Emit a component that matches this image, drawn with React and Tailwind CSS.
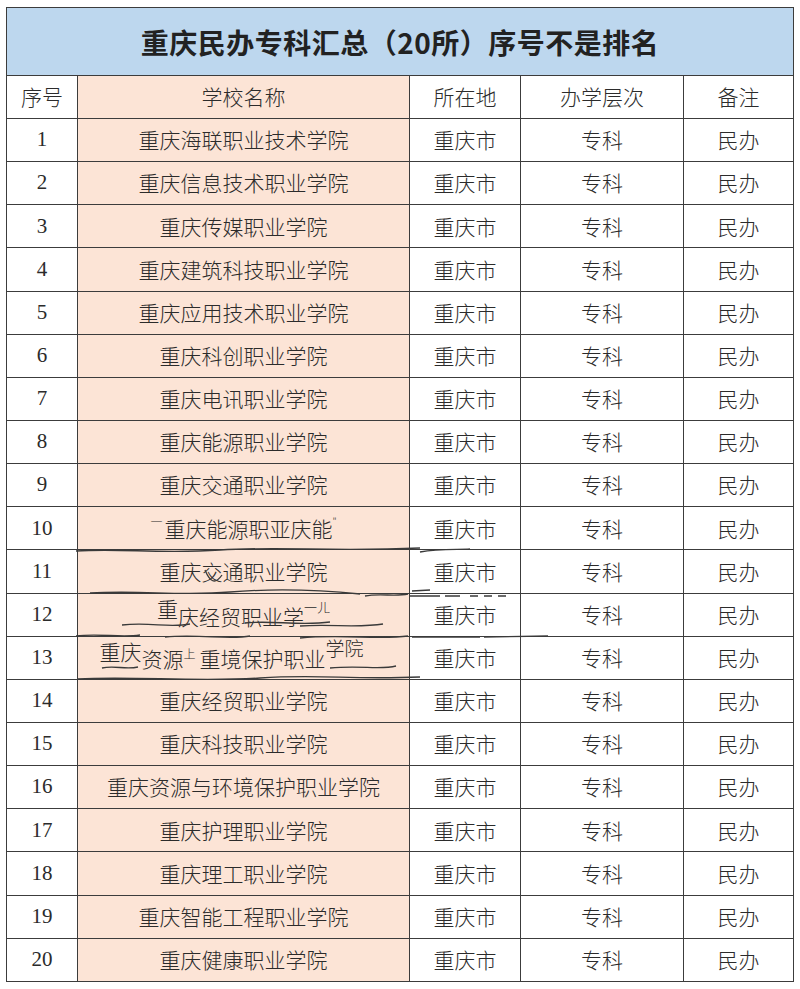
import React from "react";

const names = [
  "重庆海联职业技术学院",
  "重庆信息技术职业学院",
  "重庆传媒职业学院",
  "重庆建筑科技职业学院",
  "重庆应用技术职业学院",
  "重庆科创职业学院",
  "重庆电讯职业学院",
  "重庆能源职业学院",
  "重庆交通职业学院",
  null,
  null,
  null,
  null,
  "重庆经贸职业学院",
  "重庆科技职业学院",
  "重庆资源与环境保护职业学院",
  "重庆护理职业学院",
  "重庆理工职业学院",
  "重庆智能工程职业学院",
  "重庆健康职业学院",
];

const cjk = { fontFamily: '"Noto Sans CJK SC", "Noto Sans", sans-serif' };
const num = { fontFamily: '"Liberation Serif", "DejaVu Serif", serif' };

function Glitch({ i }) {
  if (i === 9)
    return (
      <span className="relative inline-block">
        <span className="text-[12px] align-top mr-[2px]">一</span>
        重庆能源职亚庆能
        <span className="text-[10px] align-top">"</span>
      </span>
    );
  if (i === 10)
    return <span>重庆交通职业学院</span>;
  if (i === 11)
    return (
      <span className="inline-flex items-start">
        <span className="-translate-y-[6px] inline-block">重</span>
        <span className="translate-y-[2px] inline-block">庆经贸职业学</span>
        <span className="text-[13px] -translate-y-[2px] inline-block">一ㄦ</span>
      </span>
    );
  return (
    <span className="inline-flex items-start -translate-x-[12px]">
      <span className="-translate-y-[6px] inline-block">重庆</span>
      <span className="translate-y-[1px] inline-block">资源</span>
      <span className="text-[12px] translate-y-[3px] inline-block mr-[4px]">上</span>
      <span className="translate-y-[1px] inline-block">重境保护职业</span>
      <span className="text-[19px] -translate-y-[8px] inline-block">学院</span>
    </span>
  );
}

export default function App() {
  return (
    <div className="w-[800px] h-[989px] bg-white relative" style={cjk}>
      <div className="pt-[7px] pl-[6px]">
        <table className="border-collapse table-fixed text-[#2b2b2b]" style={{ width: 787 }}>
          <colgroup>
            <col style={{ width: 71 }} />
            <col style={{ width: 332 }} />
            <col style={{ width: 111 }} />
            <col style={{ width: 163 }} />
            <col style={{ width: 110 }} />
          </colgroup>
          <tbody>
            <tr className="h-[68px]">
              <td
                colSpan={5}
                className="border-[1.5px] border-[#3c3c3c] bg-[#bdd7ee] text-center text-[28px] font-bold tracking-[0.5px] text-[#222]"
              >
                重庆民办专科汇总（20所）序号不是排名
              </td>
            </tr>
            <tr className="h-[43px] text-[21px] font-light">
              <td className="border-[1.5px] border-[#3c3c3c] text-center">序号</td>
              <td className="border-[1.5px] border-[#3c3c3c] text-center bg-[#fce4d6]">学校名称</td>
              <td className="border-[1.5px] border-[#3c3c3c] text-center">所在地</td>
              <td className="border-[1.5px] border-[#3c3c3c] text-center">办学层次</td>
              <td className="border-[1.5px] border-[#3c3c3c] text-center">备注</td>
            </tr>
            {names.map((n, i) => (
              <tr key={i} className="h-[43.15px] text-[21px] font-light">
                <td className="border-[1.5px] border-[#3c3c3c] text-center text-[21px]" style={num}>
                  {i + 1}
                </td>
                <td className="border-[1.5px] border-[#3c3c3c] text-center bg-[#fce4d6] whitespace-nowrap">
                  {n ? n : <Glitch i={i} />}
                </td>
                <td className="border-[1.5px] border-[#3c3c3c] text-center">重庆市</td>
                <td className="border-[1.5px] border-[#3c3c3c] text-center">专科</td>
                <td className="border-[1.5px] border-[#3c3c3c] text-center">民办</td>
              </tr>
            ))}
          </tbody>
        </table>
      </div>
      <svg
        className="absolute left-0 top-0 pointer-events-none"
        width="800"
        height="989"
        viewBox="0 0 800 989"
        fill="none"
        stroke="#3a3a3a"
        strokeWidth="1.3"
      >
        <path d="M76 551 C120 548 160 554 220 550 S330 552 420 548 M420 552 C440 548 460 550 470 549" />
        <path d="M205 570 C210 582 215 585 222 575" />
        <path d="M90 593 C140 590 180 596 230 592 S320 590 360 594 M365 596 C380 593 395 597 408 594 M412 591 L430 590" />
        <path d="M122 625 C150 622 170 628 190 624 M245 623 C270 620 300 626 330 622 M300 626 C330 624 360 628 383 624" />
        <path d="M410 596 L440 596 M445 596 L460 596 M470 596 L478 596 M484 596 L492 596 M498 596 L506 596" />
        <path d="M76 636 C100 633 120 638 140 635 M165 637 C200 634 230 640 250 636 M300 638 C340 634 380 640 408 636 M412 637 L480 637 M484 637 L548 636" />
        <path d="M102 668 C115 665 125 670 138 667 M330 668 C360 665 380 670 396 666" />
        <path d="M78 679 C130 676 200 682 260 678 S350 680 420 677" />
      </svg>
    </div>
  );
}
